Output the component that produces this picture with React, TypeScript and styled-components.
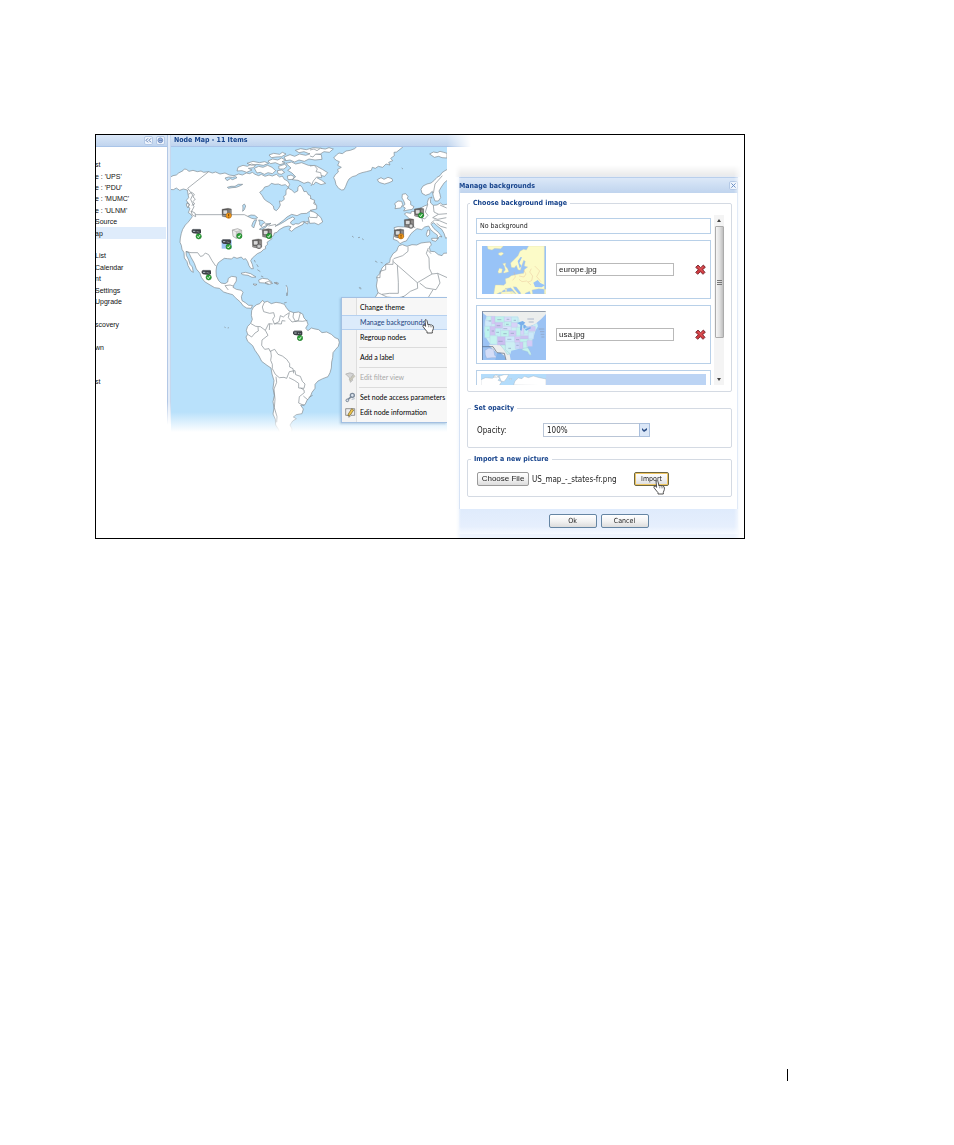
import React from 'react';
import styled, { createGlobalStyle, css } from 'styled-components';

const ui = `"DejaVu Sans Condensed", "Liberation Sans", sans-serif`;
const arial = `"Liberation Sans", Arial, sans-serif`;
const menuFont = `Lato, "Liberation Sans", sans-serif`;

const GlobalStyle = createGlobalStyle`
  * { box-sizing: border-box; }
  body { margin: 0; background: #fff; color: #222; font: 7px/11px ${ui}; }
  button, input, select { font: inherit; color: inherit; margin: 0; }
`;

const Page = styled.main`
  min-height: 100vh;
  display: flex;
  flex-direction: column;
  justify-content: space-between;
  padding: 134px 166px 64px 95px;
`;

const Figure = styled.section`
  display: flex;
  align-items: flex-start;
  margin-right: 43px;
  border: 1px solid #000;
  overflow: hidden;
`;

const FooterRule = styled.footer`
  align-self: flex-end;
  height: 12px;
  border-right: 1px solid #000;
`;

const headerFill = css`
  background: linear-gradient(#dce8f8, #cddef3 50%, #c0d4ee);
  color: #15428b;
  font-weight: bold;
`;

/* ---- navigation ---- */

const Sidebar = styled.nav`
  flex: 0 0 71px;
  overflow: hidden;
`;

const SidebarHeader = styled.div`
  ${headerFill}
  display: flex;
  justify-content: flex-end;
  gap: 3px;
  height: 12px;
  padding: 1px 2px 1px 0;
  border-bottom: 1px solid #a9c4e8;
`;

const ToolButton = styled.button`
  display: flex;
  align-items: center;
  justify-content: center;
  width: 9px;
  height: 9px;
  padding: 0;
  border: 1px solid #b4c9e6;
  border-radius: 2px;
  background: #eef4fc;
  svg { flex: none; }
`;

const NavList = styled.ul`
  display: grid;
  grid-auto-rows: 1fr;
  min-height: 228px;
  margin: 12px 1px 0 0;
  padding: 0;
  list-style: none;
`;

const NavItem = styled.li<{ $active?: boolean }>`
  display: flex;
  align-items: center;
  white-space: pre;
  background: ${(p) => (p.$active ? '#dfecfb' : 'none')};
  a {
    margin-left: -1px;
    color: #111;
    font: 7px/11px ${arial};
    text-decoration: none;
  }
`;

const Splitter = styled.div`
  flex: 0 0 4px;
  height: 290px;
  border-left: 1px solid #b3c8e6;
  border-right: 1px solid #c6d7ee;
  background: #e3ecf8;
  mask-image: linear-gradient(#000 92%, transparent);
`;

/* ---- map ---- */

const MapPanel = styled.section`
  flex: 0 0 276px;
`;

const MapHeader = styled.h2`
  ${headerFill}
  height: 12px;
  margin: 0 -24px 0 0;
  padding: 0 3px;
  border-bottom: 1px solid #a9c4e8;
  font-size: 7px;
  line-height: 11px;
  mask-image: linear-gradient(to right, #000 92%, transparent);
`;

const MapCanvas = styled.div`
  position: relative;
  overflow: hidden;
  > svg { display: block; width: 100%; height: 285px; }
`;

const Menu = styled.div`
  position: absolute;
  top: 150px;
  left: 170px;
  right: 0;
  padding: 2px 0;
  border: 1px solid #a3c0e2;
  border-right: 0;
  background: linear-gradient(to right, #f3f3f3 14px, #dedede 14px, #dedede 15px, #f7f7f7 15px);
  box-shadow: -1px 1px 2px rgba(90, 130, 170, 0.35);
`;

const MenuItem = styled.button<{ $hover?: boolean }>`
  display: grid;
  grid-template-columns: 18px 1fr;
  align-items: center;
  width: 100%;
  height: 15px;
  padding: 0;
  border: 0;
  border-top: 1px solid ${(p) => (p.$hover ? '#b5d0f0' : 'transparent')};
  border-bottom: 1px solid ${(p) => (p.$hover ? '#b5d0f0' : 'transparent')};
  background: ${(p) => (p.$hover ? '#dcebfb' : 'none')};
  color: ${(p) => (p.$hover ? '#1f457f' : '#000')};
  && { font: 7px/11px ${menuFont}; }
  text-align: left;
  white-space: nowrap;
  svg { margin-left: 3px; }
  span { grid-column: 2; }
  &:disabled { color: #a8a8a8; }
`;

const MenuRule = styled.hr`
  height: 1px;
  margin: 2px 0 2px 17px;
  border: 0;
  background: #dcdcdc;
`;

const MenuPointer = styled.span`
  position: absolute;
  top: 21px;
  left: 80px;
  svg { display: block; }
`;

/* ---- dialog ---- */

const DialogShade = styled.div`
  flex: 1;
  min-width: 0;
  margin: 30px 2px 0 8px;
  padding: 12px 4px 4px;
  background:
    linear-gradient(#fff, #ededed 75%, #e6eaf1) 0 0 / 100% 12px no-repeat,
    linear-gradient(to right, #fff, #eef4fd 4px, #eef4fd calc(100% - 4px), #fff);
  mask-image: linear-gradient(to right, transparent, #000 6px, #000 calc(100% - 8px), transparent);
`;

const DialogHeader = styled.header`
  ${headerFill}
  display: flex;
  align-items: center;
  justify-content: space-between;
  height: 16px;
  border-top: 1px solid #b9cfec;
  h2 { margin: 0; font-size: 7px; line-height: 12px; }
`;

const DialogBody = styled.form`
  padding: 6px 5px 12px 7px;
  border: 1px solid #c9daf1;
  border-width: 0 1px;
  background: #fff;
`;

const DialogFooter = styled.footer`
  display: flex;
  justify-content: center;
  gap: 4px;
  height: 25px;
  padding-top: 5px;
  background: linear-gradient(#dfebfc, #e6effd 70%, #f6faff);
`;

const Group = styled.fieldset<{ $pad: string; $gap?: number }>`
  min-width: 0;
  margin: 0 0 ${(p) => p.$gap ?? 0}px;
  padding: ${(p) => p.$pad};
  border: 1px solid #d4dae3;
  border-radius: 2px;
  legend {
    margin-left: -6px;
    padding: 0 3px;
    color: #15428b;
    font-size: 7px;
    font-weight: bold;
    line-height: 9px;
  }
`;

const Picker = styled.div`
  display: flex;
  gap: 3px;
  height: 170px;
`;

const PickerItems = styled.div`
  flex: 1;
  display: flex;
  flex-direction: column;
  gap: 6px;
  padding-top: 3px;
  overflow: hidden;
`;

const Card = styled.div<{ $size?: 'text' | 'image' }>`
  flex: none;
  display: flex;
  align-items: ${(p) => (p.$size === 'text' ? 'center' : 'flex-start')};
  height: ${(p) => (p.$size === 'text' ? 16 : 59)}px;
  padding: ${(p) => (p.$size === 'text' ? '0 3px' : '5px 4px 5px 5px')};
  border: 1px solid #b8d0e8;
  svg { flex: none; display: block; }
`;

const SelectedBand = styled.div`
  flex: 1;
  display: flex;
  height: 48px;
  margin: -2px 0 0 -1px;
  background: #bcd4f4;
`;

const NameInput = styled.input`
  flex: 0 0 118px;
  height: 13px;
  margin: 17px 0 0 10px;
  padding: 0 2px;
  border: 1px solid #b9b9b9;
  border-radius: 0;
  background: #fff;
  && { font: 8px/11px ${arial}; }
`;

const DeleteButton = styled.button`
  width: 11px;
  height: 11px;
  margin: 18px 0 0 auto;
  padding: 0;
  border: 0;
  background: none;
`;

const ScrollTrack = styled.div`
  flex: 0 0 10px;
  display: flex;
  flex-direction: column;
  align-items: center;
  background: #f4f4f4;
  > svg { flex: none; }
`;

const ScrollThumb = styled.div`
  display: flex;
  align-items: center;
  justify-content: center;
  width: 9px;
  height: 112px;
  margin-bottom: auto;
  border: 1px solid #ababab;
  border-radius: 1px;
  background: linear-gradient(to right, #f6f6f6, #e2e2e2 50%, #bfbfbf);
`;

const Row = styled.div`
  display: flex;
  align-items: center;
  height: 14px;
  font-size: 8px;
`;

const OpacityLabel = styled.label`
  flex: 0 0 66px;
`;

const SelectBox = styled.div`
  position: relative;
  flex: 0 0 107px;
  height: 14px;
  select {
    width: 100%;
    height: 100%;
    padding: 0 3px;
    border: 1px solid #b9c5d6;
    border-radius: 0;
    background: #fff;
    appearance: none;
  }
  svg { position: absolute; top: 0; right: 0; pointer-events: none; }
`;

const PushButton = styled.button<{ $kind?: 'file' | 'gold' }>`
  position: relative;
  flex: none;
  width: ${(p) => (p.$kind === 'file' ? 52 : p.$kind === 'gold' ? 35 : 48)}px;
  height: 14px;
  padding: 0;
  border: 1px solid ${(p) => (p.$kind === 'file' ? '#9a9a9a' : p.$kind === 'gold' ? '#6d6640' : '#6585a3')};
  border-radius: 2px;
  background: linear-gradient(#fff, #f1f1f1 55%, #dcdcdc);
  box-shadow: ${(p) => (p.$kind === 'gold' ? 'inset 0 0 0 1px #efc663' : 'none')};
  && { font: ${(p) => (p.$kind === 'file' ? `8px/12px ${arial}` : `7px/12px ${ui}`)}; }
  > svg { position: absolute; top: 7px; left: 18px; }
`;

const FileName = styled.span`
  flex: 0 0 105px;
  padding-left: 3px;
  white-space: nowrap;
`;

/* ---- drawings ---- */

const Hand = () => (
  <svg width="12" height="15" viewBox="0 0 36 45" aria-hidden="true">
    <path
      d="M9 3q4-3 6 2l3 13 3-2 4 2 3-1 3 3 2 0q2 3 1 9l-3 8v5H15v-4L6 27q-5-6-3-8 4-2 8 3Z"
      fill="#fff" stroke="#333" strokeWidth="2.5" strokeLinejoin="round"
    />
    <path d="M19 19l1 6M24 19l1 6M29 20l0 5" stroke="#555" strokeWidth="1.5" fill="none" />
  </svg>
);

const RedCross = () => (
  <svg width="11" height="11" viewBox="0 0 33 33" aria-hidden="true">
    <path d="M9 3l8 8 8-8 6 7-8 7 7 8-6 6-8-8-8 8-6-6 8-8-8-7Z" fill="#cf3a3f" stroke="#6d1f28" strokeWidth="2.5" strokeLinejoin="round" />
    <path d="M9 8l15 15M24 8l-6 6" stroke="#e87878" strokeWidth="2" />
  </svg>
);

type Badge = 'ok' | 'warn' | 'unknown';

const BadgeMark = ({ badge }: { badge: Badge }) => (
  <g transform="translate(21 22)">
    {badge === 'ok' && (
      <>
        <circle r="8" fill="#2aa336" stroke="#176b20" strokeWidth="1.5" />
        <path d="M-4 0l3 4 5-8" fill="none" stroke="#fff" strokeWidth="2.5" />
      </>
    )}
    {badge === 'warn' && (
      <>
        <circle r="8" fill="#f29a1c" stroke="#b0680a" strokeWidth="1.5" />
        <path d="M0-5v6M0 3v3" stroke="#5b3200" strokeWidth="2.5" />
      </>
    )}
    {badge === 'unknown' && (
      <>
        <circle r="7" fill="#aaa" stroke="#555" strokeWidth="2" />
        <path d="M-3-3l6 6M3-3l-6 6" stroke="#eee" strokeWidth="2" />
      </>
    )}
  </g>
);

const Pin = ({ x, y, kind, badge, lit }: { x: number; y: number; kind: 'rack' | 'pc' | 'box'; badge: Badge; lit?: boolean }) => (
  <g transform={`translate(${x} ${y})`}>
    {lit && <path d="M0 2h30v26H0Z" fill="#9cc4f2" />}
    {kind === 'rack' && (
      <>
        <path d="M0 3l4-3h22l2 4v8l-6 3-18-2-4-4Z" fill="#3a3e44" />
        <path d="M1 3l4-2h20" fill="none" stroke="#8b9096" strokeWidth="2" />
        <path d="M4 7h7" stroke="#b9c2cc" strokeWidth="3" />
        <path d="M15 8h3M20 9h3" stroke="#d9dee4" strokeWidth="2" />
      </>
    )}
    {kind === 'pc' && (
      <>
        <path d="M1 3l18-3 10 2v22l-8 4-19-4Z" fill="#6b6866" stroke="#444" />
        <path d="M4 5h14v13H4Z" fill="#d9d9d9" stroke="#333" strokeWidth="1.5" />
        <path d="M22 5v17M26 5v16" stroke="#a9a6a4" strokeWidth="2" />
        <path d="M3 22h16" stroke="#bbb" strokeWidth="2" />
      </>
    )}
    {kind === 'box' && (
      <>
        <path d="M0 4l16-4 12 5v16l-16 8L2 23Z" fill="#ededed" stroke="#777" strokeWidth="1.5" />
        <path d="M13 10l14-4v15l-14 7Z" fill="#cfcfcf" />
        <path d="M0 4l12 5 16-4M12 9v20" fill="none" stroke="#999" strokeWidth="1.5" />
      </>
    )}
    <BadgeMark badge={badge} />
  </g>
);

const NorthAmerica = () => (
  <g transform="translate(-18 -6)">
    <path d="M12 99L24 92 34 90 41 84 54 77 58 72 64 73 72 79 84 76 97 80 108 78 116 82 131 80 142 84 152 81 165 87 180 84 193 90 207 92 221 87 232 90 244 84 254 86 262 82 270 88 281 92 289 88 300 94 312 90 322 93 334 88 344 96 352 93 358 103 368 108 374 118 369 129 380 135 388 143 398 138 399 127 405 120 412 128 417 140 424 139 431 150 436 151 438 164 446 168 452 178 450 190 438 196 425 205 408 206 396 212 380 208 366 216 355 226 342 236 330 244 344 238 358 230 370 222 383 216 390 221 380 228 376 234 384 240 392 236 400 237 410 231 418 229 414 238 402 244 390 250 380 259 372 254 378 245 370 243 357 246 343 254 336 262 328 264 326 272 318 276 321 281 313 287 306 292 308 298 301 304 302 311 295 314 288 321 277 326 269 333 262 339 257 347 262 358 265 371 258 371 252 362 248 350 242 341 235 343 229 336 216 340 206 336 200 342 188 341 178 340 168 347 160 353 155 363 153 378 154 393 161 407 168 414 180 416 188 411 190 400 200 394 214 396 214 408 207 419 204 427 214 433 229 436 234 442 229 455 231 467 241 473 251 481 262 481 259 490 245 489 235 483 226 471 211 458 203 449 188 445 176 441 163 430 149 428 132 418 119 410 109 397 105 385 94 372 88 355 78 337 71 322 63 319 64 331 71 345 75 358 82 366 85 382 78 378 69 362 66 350 58 339 57 323 51 313 49 301 45 292 46 279 49 265 53 253 61 240 69 232 77 222 82 215 77 207 70 203 75 190 67 183 70 175 64 166 71 158 69 147 67 135 55 132 44 136 34 129 25 134 12 133Z" />
    <path fill="#b9e1fb" d="M284 142L294 134 299 126 311 123 319 115 330 118 340 117 350 121 361 119 370 127 363 137 363 149 356 154 358 163 350 169 343 168 346 180 341 190 334 197 327 193 325 183 315 174 306 169 298 163 291 151Z" />
    <path fill="#b9e1fb" d="M248 214L258 210 269 211 278 218 270 222 260 220ZM268 226L275 224 270 237 266 249 260 243 264 232ZM281 225L294 227 300 233 292 237 289 245 284 239 284 232ZM283 253L294 246 308 240 302 247 290 254ZM301 237L318 235 312 239Z" />
    <path fill="#b9e1fb" d="M180 99L191 96 202 97 212 95 216 98 203 104 196 101 186 107ZM187 127L198 124 210 124 220 118 233 118 226 122 214 127 201 128 190 130ZM233 181l5-4 4 6-4 11-5 5 1-10Z" />
    <path fill="none" d="M131 80L68 130 83 150 77 163 87 185 80 199 89 209H238L248 214 M70 148l10-6 8 6-4 8 7 6-7 8 5 7-9 4M66 172l8 6-5 10M63 320L78 323 98 323 106 334 113 333 121 324 131 329 141 347 152 363M310 243L333 238M190 435l-10-13 15-2 10 3" />
    <path d="M65 175l8 3-5 10-4-8ZM78 198l12 6 2 11-10-5Z" />
    <path d="M219 67L234 61 247 64 260 57 271 61 265 68 250 70 261 75 245 82 231 77 216 78ZM268 70L281 64 294 67 308 61 321 67 332 77 322 86 309 83 298 88 286 82 276 84ZM246 55L264 49 283 53 299 50 311 55 295 61 276 58 260 61ZM309 48L323 42 338 45 350 39 362 46 351 50 361 54 345 59 331 53 316 56ZM341 64L359 58 366 64 357 72 342 72ZM337 77L350 75 359 82 349 88 339 86ZM312 30L326 25 344 28 352 22 363 27 350 35 333 36 319 38ZM357 36L375 29 389 34 404 27 422 31 440 25 469 29 471 43 450 45 432 42 418 49 402 45 389 51 375 45 363 47ZM391 16L407 11 424 14 445 8 470 10 469 21 450 22 432 26 417 20 402 23ZM363 55L380 51 392 57 410 53 430 61 452 62 472 73 488 83 479 94 466 91 457 99 470 106 482 115 468 119 452 111 446 119 429 111 417 115 399 106 382 104 392 95 381 84 368 76 378 69ZM367 93l11-3 10 5-5 8-14 1Z" />
    <path d="M430 218l12-8 16-1 10 9 5 13-13 8-11-5-15 1ZM418 232l12-3-2 8ZM228 385l13-3 16 4 16 10-12 1-12-6-16-2ZM281 405l11-5 16 2 12 9-11 7-10-4-16-1ZM264 417l12 1-6 4ZM327 413l9-1-1 5ZM268 345l3 7M275 358l5 8M277 374l9 6M288 393l7 3M363 420l4 8 1 10-1 14" />
  </g>
);

const SouthAmerica = () => (
  <g transform="translate(177 399)">
    <path d="M65 92L70 82 80 74 89 71 98 61 103 67 112 64 124 71 138 67 151 69 163 73 169 83 177 93 191 98 206 96 218 102 222 114 230 122 234 133 227 145 234 152 244 144 255 147 266 149 276 158 290 156 304 163 315 173 325 177 328 187 325 199 317 208 309 218 308 233 305 246 304 264 300 278 294 290 278 296 264 303 255 313 255 325 246 337 241 350 231 361 225 374 212 376 220 387 216 401 199 404 190 411 199 416 188 423 180 435 186 447 184 465H150L146 449 137 435 136 418 129 402 132 384 129 365 133 347 129 325 132 302 126 282 123 264 111 256 95 244 87 228 75 211 68 197 53 184 48 171 53 163 49 151 53 139 62 130 67 118 64 106Z" />
    <path fill="none" d="M103 67L97 81 101 95 119 100 131 98 134 109 128 118 133 132 147 125 151 107 160 111 167 105 178 98M191 98l-2 13 7 13 9-2 6-24M133 132l8-1 13 1 2-10 10 1M178 98l-3 15 11 13 16-3 16 1 14-3M63 131l14 8 14 1 15 11 8 15M53 163l12 8 10-12 10-6-1-12M106 151l10-20 12 1M114 166l-18 14-1 16 9 12 13-2 3 8 14-6 10 15 13 5 13 10 9 13 0 10 10 5 2 14M122 213l2 15-2 13 5 12 0 13 9 17M136 283l12 10 14-1 8 3 8-20 17-3 2 12 14 5 6 15 8 8-3 13-16-1 0-14-13-9-16-8M212 324l10 6 1 8-15 12-2 19 17 8M138 290l2 17-8 20 3 31-2 25 8 27-1 17M118 150l1-18M234 360l-14-12M236 352l12-6" />
    <path d="M105 8l11-4 12 6-10 3ZM137 10l8-1-1 4ZM170 38v10M162 69l8-2" />
  </g>
);

const EuropeAfrica = () => (
  <g transform="translate(417 -51)">
    <path d="M71 84L79 75 87 69 97 71 108 63 121 61 134 56 142 48H282L270 58 260 66 252 67 253 77 242 85 248 92 236 97 240 105 228 102 218 112 205 109 196 115 187 112 184 121 169 125 156 128 145 132 138 137 127 140 117 147 112 156 107 169 102 179 95 180 86 175 78 164 75 151 71 143 76 134 85 126 83 118 94 112 83 106 88 95 79 91Z" />
    <path d="M202 149l11-6 9 5 12-6 12 4 2 7-11 5-13 4-11-3-7-3ZM359 72l11-6 12 2 8-4 11 3 10 3v14l-15-1-10-4-13 3ZM277 193l10-2 7 8-2 7 10 8 0 10 10 6-5 8-13 2-13 3 5-9-8-5 7-6-4-11-5-8ZM254 221l10-8 11 1 3 10-6 10-17 2 2-8ZM353 300l6 0 0 13-7 7-3-7ZM365 325l20 0-8 9-11-3Z" />
    <path d="M414 117L405 122 396 128 390 137 381 142 373 151 363 159 351 162 339 168 333 178 336 190 347 196 358 192 367 184 370 199 375 213 385 213 392 203 390 193 387 183 394 171 403 158 414 149Z" />
    <path d="M414 222L399 225 391 219 381 225 370 226 362 219 361 208 366 201 356 205 352 217 353 224 343 228 334 233 323 238 316 245 304 244 303 250 289 248 283 252 290 258 299 267 301 280 296 290 280 291 264 290 252 293 255 304 251 317 250 328 262 332 270 341 281 335 289 333 296 322 303 311 313 302 321 296 335 299 344 291 356 288 362 299 372 308 382 315 382 326 389 319 396 321 385 307 372 296 363 283 371 278 383 289 395 298 402 310 407 325 414 321Z" />
    <path d="M267 347L277 344 291 349 306 344 320 345 333 339 348 337 361 336 364 345 358 351 361 364 374 365 385 374 396 377 401 370 414 369V560H214L202 531 197 500 204 488 199 468 202 450 200 441 210 430 216 414 228 402 239 397 241 385 249 371 260 363 264 352Z" />
    <path fill="none" d="M294 350v14l-16 13-27 9M249 388v15h-22M227 403v16l-17 5v19h-10M250 395l72 63M322 458l44-26-8-17-1-31-8-14 6-16M366 432l17-2 31 14M262 406l3 51v33h-27l-22 3M322 458l1 17-22 9-16 13-15 8M383 430l7 29-12 20-30-5-19-15M204 488l27 13 30 3 19-4 29 25 40-13 20-33M363 371l-9-10M313 245l11 10 11 5 3 15M334 233l-1 15M353 224l-7 22 8 10-10 11-12-5M370 226l2 20 14 7 25-2M385 253l-17 10 15 5 26-5M362 280l12-10 14 2 24 10M301 286l15 7M262 298v25M380 280l12 9 18 5M390 225l20 9M370 190l5-28 22-25" />
    <path d="M0 60L12 57 21 62 31 55 46 57 57 53 70 57 58 67 42 65 31 72 17 72 9 81 0 78M0 108l13-2 9 11-4 8 14 3 3 15-15-2-10 12-7 15M0 205l14 6-3 10 9 5 0 11-20 4M0 243l12 3 10 6-1 11-21-1M275 114l4 3M126 318l5 4M144 323l6-1M156 326l5 3M195 393l7 4M212 397l6 2M148 472l6 3" />
  </g>
);

const WorldMap = () => (
  <svg viewBox="0 0 828 855" preserveAspectRatio="xMinYMin slice" role="img" aria-label="World map with nodes">
    <defs>
      <linearGradient id="fade" x1="0" y1="0" x2="0" y2="1">
        <stop offset="0" stopColor="#fff" stopOpacity="0" />
        <stop offset="1" stopColor="#fff" />
      </linearGradient>
    </defs>
    <path d="M0 0H828V855H0Z" fill="#b9e1fb" />
    <g fill="#fff" stroke="#7f888e" strokeWidth="2" strokeLinejoin="round">
      <NorthAmerica />
      <SouthAmerica />
      <EuropeAfrica />
      <path d="M160 540l4 2M170 543l4-1M565 422l4 5" />
    </g>
    <path d="M0 795H828V855H0Z" fill="url(#fade)" />
    <g transform="translate(-18 -6)">
      <Pin x={170} y={190} kind="pc" badge="warn" />
      <Pin x={80} y={252} kind="rack" badge="ok" />
      <Pin x={202} y={251} kind="box" badge="ok" />
      <Pin x={291} y={251} kind="pc" badge="ok" />
      <Pin x={170} y={283} kind="rack" badge="ok" lit />
      <Pin x={261} y={282} kind="pc" badge="unknown" />
      <Pin x={110} y={375} kind="rack" badge="ok" />
    </g>
    <g transform="translate(417 -51)">
      <Pin x={312} y={234} kind="pc" badge="ok" />
      <Pin x={282} y={266} kind="pc" badge="unknown" />
      <Pin x={252} y={297} kind="pc" badge="warn" />
    </g>
    <g transform="translate(177 399)">
      <Pin x={189} y={152} kind="rack" badge="ok" />
    </g>
  </svg>
);

const EuropeThumb = () => (
  <svg width="64" height="48" viewBox="0 0 192 144" role="img" aria-label="Europe">
    <path d="M0 0H192V144H0Z" fill="#98c3f7" />
    <g fill="#fcfbc8" stroke="#d9d6ac" strokeWidth="1">
      <path d="M16 0h48l-8 8-18-1-8 5-12-3ZM50 21l10-2 5 4-8 6-7-3Z" />
      <path d="M192 0H140l-7 12-8-2-11 6-6 13-12 12-10 10 2 13 9 1 6-7 5 13 7 2 5-17 5-13 5 3-3 14 10 3-10 8-2 11-14 2-11 2-12 3-8 6-10 3 2 14-7 6-13-1-12 0-3 17-2 12 10 4 9-2 8-14 10-6 14-3 6 6 8 10 6 9-7 1 8 2 4-8-14-16-3-7 9 1 12 16 6 15 8 7 6-8-6-11 14-6 3 9 13 7 28 2V0ZM70 72l-3-12-5-7 9-2-1 9 7 8 3 9-13 4-3-2ZM48 77l4-10 9 2-2 11-9 2ZM70 127h4v10h-4ZM84 137l10 1-4 4ZM44 144l10-5 37-3 10 8ZM150 132l20-4 22 2v14h-40Z" />
      <path d="M148 68l-5 10 9 12-3 14-11 4M125 72l7 12-6 9-15-3M96 78l4 15-8 10M111 100l9 7 14-2 13 12M158 60l15 15-9 17 13 15" fill="none" stroke="#e2ad88" />
    </g>
    <path d="M154 110l13-8 8 9 14 7-10 6-20-1ZM107 45l9-12 4 1-8 17 7 9-6 7Z" fill="#98c3f7" />
  </svg>
);

const stateTiles: [number, number, number, number, string][] = [
  [14, 16, 14, 13, '#c8f2ee'], [28, 16, 11, 23, '#d5c7f4'], [39, 17, 28, 17, '#bff4ea'], [67, 18, 21, 14, '#d9dbfa'], [88, 18, 20, 17, '#c8eff4'],
  [9, 29, 19, 17, '#cfeaf9'], [67, 32, 21, 14, '#c1f3ec'], [39, 34, 23, 18, '#cfc4f2'], [88, 35, 18, 14, '#d8d2f8'], [8, 46, 16, 34, '#bdf4ee'],
  [24, 46, 16, 27, '#d0c4f2'], [40, 52, 16, 25, '#c2eff3'], [62, 46, 26, 13, '#d9e1fb'], [56, 58, 25, 19, '#bff2eb'], [81, 59, 22, 17, '#d2c9f5'],
  [24, 74, 22, 26, '#c5f3ef'], [46, 77, 24, 25, '#cbbff0'], [70, 77, 28, 15, '#cdeafa'], [98, 77, 17, 18, '#d7c8f4'], [103, 49, 13, 25, '#c1f3eb'],
  [116, 51, 10, 20, '#d7d5f9'], [126, 52, 13, 17, '#c4eff4'], [115, 74, 28, 10, '#cbc2f1'], [114, 84, 25, 9, '#c0f3ec'], [100, 95, 13, 18, '#ccd5fa'],
  [113, 93, 10, 20, '#d2c5f4'], [123, 92, 12, 20, '#c4f1ec'], [135, 88, 16, 18, '#d4cbf6'], [139, 64, 16, 20, '#cbe9f9'], [140, 46, 20, 15, '#d0c7f4'],
];

const UsaThumb = () => (
  <svg width="64" height="49" viewBox="0 0 192 147" role="img" aria-label="USA">
    <path d="M0 0H192V147H0Z" fill="#9cc3f4" />
    <path d="M0 0H192V9l-15 16-18 15-20 7-22-7-10-17L15 16 5 8ZM20 101l34 0 27 19 5 27H65Z" fill="#eceeed" />
    <path d="M14 16H108L118 39 125 38 130 51 140 50 155 42 165 36 168 46 160 59 156 74 150 89 143 100 136 109 143 120 148 132 141 130 132 114 117 112 98 117 88 119 85 130 76 128 69 116 55 103 24 98 13 82 7 60 9 30Z" fill="#cceff3" />
    {stateTiles.map(([x, y, w, h, c]) => (
      <path key={`${x}-${y}`} d={`M${x} ${y}h${w}v${h}h${-w}Z`} fill={c} stroke="#b9cbe6" strokeWidth="1" />
    ))}
    <path d="M55 102h15v14l14 12-8 3-10-15ZM124 112l14-2 9 17-2 8-8-13-18-5Z" fill="#c6f2ec" stroke="#9ab5d6" />
    <path d="M105 36l17-6 8 5-9 8-2 16-5-2 1-15ZM124 39l8 5-3 9-5-3ZM129 55l16-7 2 4-15 7Z" fill="#78aeea" />
    <path d="M20 30h7M46 26h12M74 25h8M95 28h7M44 44h11M72 40h8M15 57h6M29 60h7M43 64h8M64 53h12M64 68h10M86 67h10M49 91h13M76 85h12M102 86h9M103 103h7M136 24h20M140 33h15M170 54h17M174 62h13M176 70h11M178 78h9M79 112h8" stroke="#8c9ebd" strokeWidth="2" />
    <path d="M9 118l12-7 14 4 3 18 9 7-17 0-16 2-4-10Z" fill="#d4ddf7" stroke="#8aa0c8" />
    <path d="M40 147l5-20 10-2 12 9 4 13Z" fill="#86b4ea" />
    <path d="M1 147V1H191M1 107H33L45 125 67 127 72 147" fill="none" stroke="#4f5f78" strokeWidth="2" />
  </svg>
);

const WorldThumb = () => (
  <svg width="65" height="48" viewBox="0 0 195 144" role="img" aria-label="World">
    <path d="M0 0H195V144H0Z" fill="#b3dcfb" />
    <path d="M0 17l14-6 20 2 12-8 10 8-5 6 11 4-9 14H0ZM36 8l9-6 10 4-9 5ZM54 7l15-5h14l-6 11-8 10-9-2-3-9ZM85 14h7l-3 4ZM98 33l4-12 10-9 11 2 7-7 12 4 15-5 18 5 20 4v20Z" fill="#fff" stroke="#9aa7b0" strokeWidth="1" />
  </svg>
);

const FilterIcon = () => (
  <svg width="11" height="11" viewBox="0 0 33 33" aria-hidden="true">
    <path d="M2 6q14-7 24 0l-7 9 4 10-7 6-2-13Z" fill="#d5d5d5" stroke="#aaa" strokeWidth="2" />
    <path d="M12 22L27 9l3 4-14 14Z" fill="#c9c7ba" stroke="#a5a294" />
  </svg>
);

const KeyIcon = () => (
  <svg width="11" height="11" viewBox="0 0 33 33" aria-hidden="true">
    <path d="M5 26L19 14" stroke="#7b8999" strokeWidth="5" strokeLinecap="round" />
    <circle cx="22" cy="10" r="6" fill="#dde5ef" stroke="#7b8999" strokeWidth="4" />
    <circle cx="7" cy="25" r="4" fill="#dde5ef" stroke="#7b8999" strokeWidth="3" />
    <path d="M20 22l9-2" stroke="#aab7c8" strokeWidth="3" />
  </svg>
);

const EditIcon = () => (
  <svg width="11" height="11" viewBox="0 0 33 33" aria-hidden="true">
    <path d="M2 5h27v20H18l-6 6v-6H2Z" fill="#ececec" stroke="#666" strokeWidth="2" />
    <path d="M10 21L20 5l6 4-10 15-7 3Z" fill="#efc64a" stroke="#6f5a22" strokeWidth="2" />
  </svg>
);

const navEntries = [
  'st', "e : 'UPS'", "e : 'PDU'", "e : 'MUMC'", "e : 'ULNM'", 'Source', 'ap', '', 'List', 'Calendar',
  'nt', 'Settings', 'Upgrade', '', 'scovery', '', 'wn', '', '', 'st',
];

export default function App() {
  return (
    <>
      <GlobalStyle />
      <Page>
        <Figure>
          <Sidebar>
            <SidebarHeader>
              <ToolButton aria-label="Collapse">
                <svg width="7" height="7" viewBox="0 0 21 21"><path d="M9 4l-6 6 6 6M18 4l-6 6 6 6" fill="none" stroke="#5b7db5" strokeWidth="3" /></svg>
              </ToolButton>
              <ToolButton aria-label="Options">
                <svg width="7" height="7" viewBox="0 0 21 21"><circle cx="10" cy="10" r="7" fill="#a9bfe4" stroke="#6f8cc0" strokeWidth="3" /><path d="M6 10h9" stroke="#5f7fb8" strokeWidth="3" /></svg>
              </ToolButton>
            </SidebarHeader>
            <NavList>
              {navEntries.map((label, i) => (
                <NavItem key={i} $active={label === 'ap'}>
                  {label && <a href="#map">{label}</a>}
                </NavItem>
              ))}
            </NavList>
          </Sidebar>
          <Splitter />
          <MapPanel>
            <MapHeader>Node Map - 11 Items</MapHeader>
            <MapCanvas>
              <WorldMap />
              <Menu>
                <MenuItem><span>Change theme</span></MenuItem>
                <MenuItem $hover><span>Manage backgrounds</span></MenuItem>
                <MenuItem><span>Regroup nodes</span></MenuItem>
                <MenuRule />
                <MenuItem><span>Add a label</span></MenuItem>
                <MenuRule />
                <MenuItem disabled><FilterIcon /><span>Edit filter view</span></MenuItem>
                <MenuRule />
                <MenuItem><KeyIcon /><span>Set node access parameters</span></MenuItem>
                <MenuItem><EditIcon /><span>Edit node information</span></MenuItem>
                <MenuPointer><Hand /></MenuPointer>
              </Menu>
            </MapCanvas>
          </MapPanel>
          <DialogShade role="dialog" aria-label="Manage backgrounds">
            <DialogHeader>
              <h2>Manage backgrounds</h2>
              <ToolButton aria-label="Close">
                <svg width="7" height="7" viewBox="0 0 21 21"><path d="M4 4l13 13M17 4L4 17" stroke="#6b8fc4" strokeWidth="3" /></svg>
              </ToolButton>
            </DialogHeader>
            <DialogBody onSubmit={(e) => e.preventDefault()}>
              <Group $pad="7px 7px 6px 8px" $gap={12}>
                <legend>Choose background image</legend>
                <Picker>
                  <PickerItems>
                    <Card $size="text">No background</Card>
                    <Card>
                      <EuropeThumb />
                      <NameInput aria-label="Europe picture name" defaultValue="europe.jpg" />
                      <DeleteButton type="button" aria-label="Delete europe.jpg"><RedCross /></DeleteButton>
                    </Card>
                    <Card>
                      <UsaThumb />
                      <NameInput aria-label="USA picture name" defaultValue="usa.jpg" />
                      <DeleteButton type="button" aria-label="Delete usa.jpg"><RedCross /></DeleteButton>
                    </Card>
                    <Card>
                      <SelectedBand><WorldThumb /></SelectedBand>
                    </Card>
                  </PickerItems>
                  <ScrollTrack>
                    <svg width="10" height="11" viewBox="0 0 10 11"><path d="M3 7h4L5 4Z" fill="#444" /></svg>
                    <ScrollThumb>
                      <svg width="5" height="5" viewBox="0 0 5 5"><path d="M0 0h5v1H0ZM0 2h5v1H0ZM0 4h5v1H0Z" fill="#777" /></svg>
                    </ScrollThumb>
                    <svg width="10" height="11" viewBox="0 0 10 11"><path d="M3 4h4L5 7Z" fill="#444" /></svg>
                  </ScrollTrack>
                </Picker>
              </Group>
              <Group $pad="10px 9px 10px" $gap={7}>
                <legend>Set opacity</legend>
                <Row>
                  <OpacityLabel htmlFor="opacity">Opacity:</OpacityLabel>
                  <SelectBox>
                    <select id="opacity" defaultValue="100%">
                      <option>100%</option>
                    </select>
                    <svg width="11" height="14" viewBox="0 0 11 14">
                      <path d="M0 0H11V14H0Z" fill="#a9bfdd" />
                      <path d="M1 1H10V13H1Z" fill="#dbe7f7" />
                      <path d="M3 5l2 2 3-2v2L5 9 3 7Z" fill="#2d4f86" />
                    </svg>
                  </SelectBox>
                </Row>
              </Group>
              <Group $pad="8px 9px 10px">
                <legend>Import a new picture</legend>
                <Row>
                  <PushButton type="button" $kind="file">Choose File</PushButton>
                  <FileName>US_map_-_states-fr.png</FileName>
                  <PushButton type="button" $kind="gold">Import<Hand /></PushButton>
                </Row>
              </Group>
            </DialogBody>
            <DialogFooter>
              <PushButton type="button">Ok</PushButton>
              <PushButton type="button">Cancel</PushButton>
            </DialogFooter>
          </DialogShade>
        </Figure>
        <FooterRule />
      </Page>
    </>
  );
}
